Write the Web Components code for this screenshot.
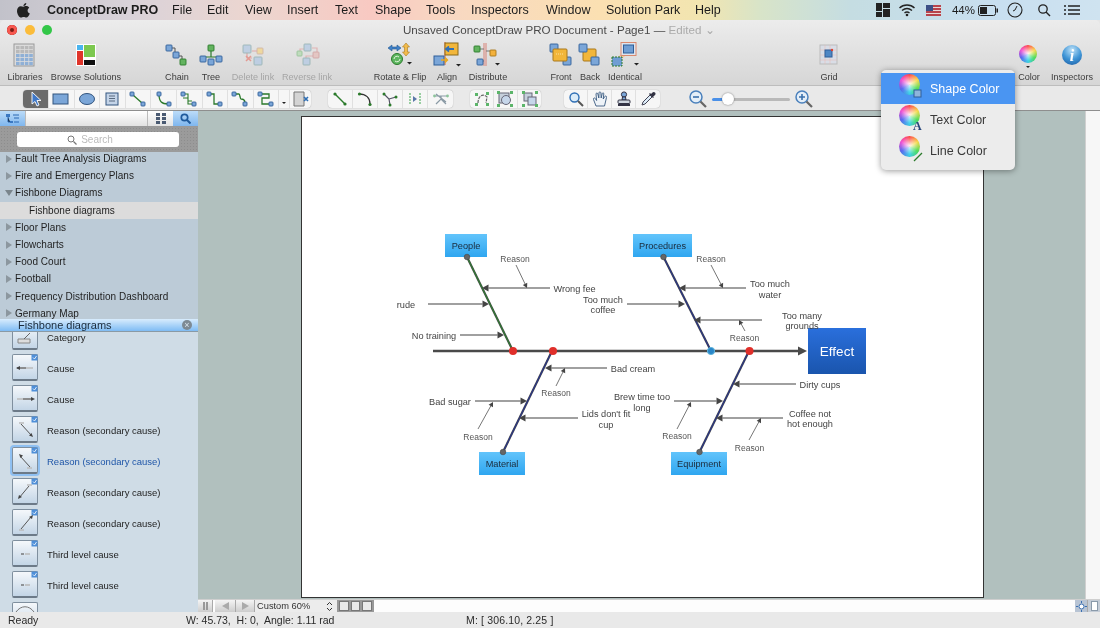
<!DOCTYPE html>
<html>
<head>
<meta charset="utf-8">
<title>ConceptDraw PRO</title>
<style>
  html, body { margin: 0; padding: 0; width: 1100px; height: 628px; overflow: hidden; font-family: "Liberation Sans", Arial, sans-serif; color: #333; background: #e6e6e6; }
  body { filter: blur(.35px); }
  #main-row { display: flex; height: 501px; }
</style>
</head>
<body>
<mac-menubar></mac-menubar>
<doc-toolbar></doc-toolbar>
<palette-bar></palette-bar>
<div id="main-row">
  <library-panel></library-panel>
  <canvas-pane></canvas-pane>
</div>
<status-bar></status-bar>
<color-menu></color-menu>

<script>
// --- small svg helpers ---
const BLUE = ["#7ba6d8", "#2f5f99"];
const GREEN = ["#63b35f", "#2b7a2b"];
const ORANGE = ["#f3b13c", "#a8761a"];

function node(x, y, s, c) {
  return `<rect x="${x}" y="${y}" width="${s}" height="${s}" rx="0.8" fill="${c[0]}" stroke="${c[1]}" stroke-width="0.9"/>`;
}
function line(d, color = "#2b7a2b", w = 1.3) {
  return `<path d="${d}" fill="none" stroke="${color}" stroke-width="${w}"/>`;
}
function svg(w, h, body, extra = "") {
  return `<svg width="${w}" height="${h}" viewBox="0 0 ${w} ${h}" ${extra}>${body}</svg>`;
}

const TOOL_ICONS = {
  libraries: () => {
    let cells = "";
    for (let r = 0; r < 5; r++) for (let c = 0; c < 4; c++) {
      const fill = r > 1 ? "#8fb0d6" : "#b9b9b9";
      cells += `<rect x="${3 + c * 4.4}" y="${3 + r * 4}" width="3.6" height="3.2" fill="${fill}"/>`;
    }
    return svg(24, 24, `<rect x="1" y="1" width="20" height="22" fill="#dcdcdc" stroke="#9a9a9a"/>${cells}`);
  },
  browse: () => svg(24, 24, `<rect x="2" y="1" width="20" height="22" fill="#fff"/><rect x="3" y="2" width="6" height="5" fill="#4ab4ee"/><rect x="10" y="2" width="11" height="12" fill="#7cc84f"/><rect x="3" y="8" width="6" height="14" fill="#e0352b"/><rect x="10" y="17" width="11" height="5" fill="#111"/>`),
  chain: () => svg(26, 24, line("M6 5 H11 V13 H18 V18", "#555", 1) + node(2, 2, 6, BLUE) + node(9, 9, 6, BLUE) + node(16, 16, 6, GREEN)),
  tree: () => svg(26, 24, line("M13 6 V14 M5 14 H21 M5 14 V16 M21 14 V16", "#2b7a2b", 1.2) + node(10, 2, 6, GREEN) + node(2, 13, 6, BLUE) + node(10, 16, 6, BLUE) + node(18, 13, 6, BLUE)),
  del: () => svg(26, 24, line("M7 7 V15 H12 M12 8 H19", "#d99", 1.2) + node(3, 2, 8, ["#b7cbe3", "#8aa"]) + node(17, 5, 6, ["#f1d68f", "#ca9"]) + node(14, 14, 8, ["#b7cbe3", "#8aa"]) + line("M6 13 L11 18 M11 13 L6 18", "#e58a80", 1.6)),
  reverse: () => svg(26, 24, line("M6 9 V6 H12 M18 5 H23 V12 M12 19 V13 H20", "#e0a8a8", 1.2) + node(10, 1, 7, ["#b7cbe3", "#8aa"]) + node(3, 8, 5, ["#b7dcb5", "#8b8"]) + node(19, 9, 6, ["#e6c0bc", "#c99"]) + node(9, 15, 7, ["#b7cbe3", "#8aa"])),
  rotate: () => svg(28, 26, `<path d="M2 6 L6 3 V5 H11 V3 L15 6 L11 9 V7 H6 V9 Z" fill="#3f80c8" stroke="#23588f" stroke-width=".6"/><path d="M20 1 L23.5 5 H21.5 V10 H23.5 L20 14 L16.5 10 H18.5 V5 H16.5 Z" fill="#f2bb4b" stroke="#a9781c" stroke-width=".6"/><circle cx="11" cy="17" r="5.5" fill="#5db660" stroke="#2b7a2b"/><path d="M8 17 a3 3 0 0 1 5 -2 M14 17 a3 3 0 0 1 -5 2" fill="none" stroke="#e8f6e0" stroke-width="1"/><path d="M22 24 h5 l-2.5 2.5z" fill="#222" transform="translate(-1,-4)"/>`),
  align: () => svg(30, 26, `<path d="M13 0 V23" stroke="#e07a5a" stroke-width="1.2"/><rect x="13" y="1" width="13" height="12" fill="#f2b63a" stroke="#8a6a1a"/><path d="M22 7 H15 M17 4.5 L14 7 L17 9.5" fill="none" stroke="#2f6fb5" stroke-width="1.8"/><rect x="2" y="14" width="10" height="9" fill="#7ba6d8" stroke="#2f5f99"/><path d="M9 18 H15 M13 15.5 L15.5 18 L13 20.5" fill="#f2b63a" stroke="#e8a820" stroke-width="1.4"/><path d="M24 22 h5 l-2.5 2.5z" fill="#222"/>`),
  distribute: () => svg(30, 26, `<path d="M11 1 V24 M13 1 V24" stroke="#d98a80" stroke-width="1.1"/><path d="M5 7 H11 M13 9 H18 M7 19 H11" stroke="#777"/>` + node(1, 4, 6, GREEN) + node(17, 8, 6, ORANGE) + node(4, 17, 6, BLUE) + `<path d="M22 21 h5 l-2.5 2.5z" fill="#222"/>`),
  front: () => svg(26, 24, node(2, 1, 8, BLUE) + node(15, 14, 8, BLUE) + `<rect x="5" y="6" width="14" height="12" rx="1" fill="#f2b63a" stroke="#a9781c"/><path d="M8 11h8" stroke="#fbe0a0" stroke-dasharray="1 1"/>`),
  back: () => svg(26, 24, `<rect x="6" y="6" width="13" height="12" rx="1" fill="#f2b63a" stroke="#a9781c"/>` + node(2, 1, 8, BLUE) + node(14, 14, 8, BLUE)),
  identical: () => svg(32, 26, `<path d="M4 22 L20 8" stroke="#f2c7a0" stroke-width="4"/><rect x="12" y="0.5" width="15" height="13" fill="#dde4ee" stroke="#d98a70"/><rect x="14.5" y="3" width="10" height="8" fill="#6f9dd3" stroke="#2f5f99"/><rect x="3" y="15" width="10" height="9" fill="#6f9dd3" stroke="#2b7a2b" stroke-dasharray="2 1"/><path d="M25 21 h5 l-2.5 2.5z" fill="#222"/>`),
  grid: () => svg(24, 24, `<rect x="3" y="2" width="17" height="19" fill="#d9dde6" stroke="#bbb"/><path d="M3 7h17M3 12h17M3 17h17M8 2v19M13 2v19" stroke="#e8b8b0" stroke-width=".5"/><rect x="8" y="7" width="7" height="7" fill="#4e86c4" stroke="#2f5f99"/><circle cx="15" cy="7" r="1.2" fill="#d43"/>`),
  info: () => `<svg width="24" height="24" viewBox="0 0 24 24"><defs><radialGradient id="ig" cx=".5" cy=".25" r=".85"><stop offset="0" stop-color="#bfe2f8"/><stop offset=".55" stop-color="#3f95d6"/><stop offset="1" stop-color="#1c5fa6"/></radialGradient></defs><circle cx="12" cy="12" r="10" fill="url(#ig)"/><text x="12" y="17.5" text-anchor="middle" font-family="Liberation Serif, serif" font-style="italic" font-weight="bold" font-size="16" fill="#fff">i</text></svg>`,
};

// color ball is a conic gradient, svg can't do this one
const BALL_CSS = `
  .ball { display: block; border-radius: 50%; background:
    radial-gradient(circle at 50% 45%, rgba(255,255,255,.9) 0, rgba(255,255,255,.1) 55%, rgba(0,0,0,.12) 100%),
    conic-gradient(#f33 0deg, #f7d63a 60deg, #3fdc4f 120deg, #2fd0e8 180deg, #4a5cf0 240deg, #f23fd0 300deg, #f33 360deg); }
`;

class MacMenubar extends HTMLElement {
  constructor() { super(); this.attachShadow({ mode: "open" }); }
  connectedCallback() {
    const menus = [["File", 172], ["Edit", 207], ["View", 245], ["Insert", 287], ["Text", 335], ["Shape", 375], ["Tools", 426], ["Inspectors", 471], ["Window", 546], ["Solution Park", 606], ["Help", 695]];
    this.shadowRoot.innerHTML = `
      <style>
        :host { display: flex; align-items: center; height: 20px; box-sizing: border-box; font-size: 12.5px; color: #1c1c1c;
          background: linear-gradient(90deg, #c2c2ca 0, #d9d2d9 130px, #ecd6d0 250px, #f8c9c2 370px, #f8d8c2 450px, #fbe0b2 600px, #f2e5b0 700px, #d8e4c8 760px, #c5dde2 850px, #c8dff0 1000px, #cfe3f0 1100px); }
        .apple { width: 47px; padding-left: 16px; box-sizing: border-box; display: flex; }
        .app { font-weight: bold; width: 125px; font-size: 12.5px; }
        .m { white-space: pre; }
        .right { margin-left: auto; display: flex; align-items: center; }
      </style>
      <span class="apple">${svg(15, 17, `<path d="M10.3 1 C10.4 2.8 8.9 4.2 7.4 4.1 C7.3 2.6 8.8 1.1 10.3 1 Z M7.3 4.8 C8.1 4.8 9 4.1 10.3 4.1 C11.5 4.1 12.6 4.8 13.2 5.7 C10.8 7.2 11.3 10.5 13.8 11.5 C13.1 13.3 11.8 15.6 10.3 15.6 C9.3 15.6 8.9 15 7.7 15 C6.5 15 6 15.6 5.1 15.6 C3.3 15.6 1 12 1 8.9 C1 6 2.9 4.3 4.8 4.3 C5.8 4.3 6.6 4.8 7.3 4.8 Z" fill="#222"/>`)}</span>
      <span class="app">ConceptDraw PRO</span>
      ${menus.map((m, i) => {
        const next = i + 1 < menus.length ? menus[i + 1][1] - m[1] : 60;
        return `<span class="m" style="width:${next}px">${m[0]}</span>`;
      }).join("")}
      <span class="right">
        ${svg(16, 16, `<path d="M1 1h6v8H1z M8 1h7v5H8z M1 10h6v5H1z M8 7h7v8H8z" fill="#222"/>`, 'style="margin-right:7px"')}
        ${svg(18, 14, `<path d="M1.5 5 C5.5 1 12.5 1 16.5 5 M4 7.5 C7 5 11 5 14 7.5 M6.5 10 C8 8.8 10 8.8 11.5 10" fill="none" stroke="#222" stroke-width="1.4"/><circle cx="9" cy="12" r="1.3" fill="#222"/>`, 'style="margin-right:10px"')}
        ${svg(15, 11, `<rect width="15" height="11" fill="#b8444c"/><path d="M0 2.5h15M0 5.5h15M0 8.5h15" stroke="#e8d8d8" stroke-width="1"/><rect width="7" height="6" fill="#3c4f86"/>`, 'style="margin-right:11px"')}
        <span style="font-size:11.5px;margin-right:3px">44%</span>
        ${svg(21, 11, `<rect x=".5" y=".5" width="17" height="10" rx="2" fill="none" stroke="#222"/><rect x="2" y="2" width="7" height="7" fill="#222"/><rect x="18.5" y="3.5" width="1.5" height="4" fill="#222"/>`, 'style="margin-right:8px"')}
        ${svg(16, 16, `<circle cx="8" cy="8" r="7" fill="none" stroke="#222" stroke-width="1.1"/><path d="M8 8 L10 4 M8 8 L6 9" stroke="#222" stroke-width="1"/>`, 'style="margin-right:14px"')}
        ${svg(14, 14, `<circle cx="6" cy="6" r="4.2" fill="none" stroke="#222" stroke-width="1.3"/><path d="M9 9 L13 13" stroke="#222" stroke-width="1.5"/>`, 'style="margin-right:13px"')}
        ${svg(16, 12, `<path d="M4 2h12M4 6h12M4 10h12" stroke="#222" stroke-width="1.4"/><path d="M0 2h2M0 6h2M0 10h2" stroke="#222" stroke-width="1.4"/>`, 'style="margin-right:20px"')}
      </span>`;
  }
}

class DocToolbar extends HTMLElement {
  constructor() { super(); this.attachShadow({ mode: "open" }); }
  connectedCallback() {
    // [label, box width, gap before it, icon]
    const tools = [
      ["Libraries", 40, 5, "libraries"],
      ["Browse Solutions", 78, 2, "browse"],
      ["Chain", 34, 35, "chain"],
      ["Tree", 34, 0, "tree"],
      ["Delete link", 50, 0, "del", true],
      ["Reverse link", 58, 0, "reverse", true],
      ["Rotate &amp; Flip", 60, 34, "rotate"],
      ["Align", 34, 0, "align"],
      ["Distribute", 48, 0, "distribute"],
      ["Front", 30, 34, "front"],
      ["Back", 28, 0, "back"],
      ["Identical", 42, 0, "identical"],
      ["Grid", 30, 168, "grid"],
      ["Color", 40, 165, "color"],
      ["Inspectors", 46, 0, "info"],
    ];
    this.shadowRoot.innerHTML = `
      <style>
        :host { display: block; height: 66px; position: relative; box-sizing: border-box; border-radius: 5px 5px 0 0; border-bottom: 1px solid #bdbdbd;
          background: linear-gradient(#ececec, #d6d6d6); }
        ${BALL_CSS}
        .title { display: flex; height: 20px; align-items: center; }
        .lights { display: flex; gap: 7.5px; padding-left: 7px; width: 403px; box-sizing: border-box; }
        .lights i { width: 10px; height: 10px; border-radius: 50%; display: block; }
        .name { font-size: 11.6px; color: #4a4a4a; white-space: pre; }
        .name em { font-style: normal; color: #ababab; }
        .tools { display: flex; height: 45px; }
        .tool { display: flex; flex-direction: column; align-items: center; flex: none; font-size: 9.1px; color: #3c3c3c; white-space: nowrap; }
        .ic { height: 25px; margin-top: 2px; margin-bottom: 5px; display: flex; align-items: center; justify-content: center; }
        .off { color: #a5a5a5; }
        .off svg { opacity: .8; }
        .colorbox { position: relative; width: 20px; height: 20px; }
        .colorbox .ball { width: 18px; height: 18px; }
        .colorbox b { position: absolute; left: 7px; top: 21px; border: 2.5px solid transparent; border-top-color: #222; border-bottom: 0; }
      </style>
      <div class="title">
        <div class="lights">
          <i style="background:#f8584f;box-shadow:inset 0 0 0 3px #f8584f, inset 0 0 0 5px #7a1c14"></i>
          <i style="background:#fbbc3a"></i>
          <i style="background:#33c748"></i>
        </div>
        <span class="name">Unsaved ConceptDraw PRO Document - Page1 — <em>Edited ⌄</em></span>
      </div>
      <div class="tools">
        ${tools.map(t => `
          <div class="tool ${t[4] ? "off" : ""}" style="width:${t[1]}px;margin-left:${t[2]}px">
            <div class="ic">${t[3] === "color" ? '<span class="colorbox"><span class="ball"></span><b></b></span>' : TOOL_ICONS[t[3]]()}</div>
            <span>${t[0]}</span>
          </div>`).join("")}
      </div>`;
  }
}

const PAL = {
  arrow: svg(16, 16, `<path d="M4 1 L4 13 L7 10.5 L9 15 L11 14 L9 9.5 L13 9.5 Z" fill="#3f78c8" stroke="#fff" stroke-width=".9"/>`),
  rect: svg(18, 14, `<rect x="1" y="2" width="15" height="10" fill="#7ba6d8" stroke="#33557f"/>`),
  oval: svg(18, 14, `<ellipse cx="9" cy="7" rx="7.5" ry="5.5" fill="#7ba6d8" stroke="#33557f"/>`),
  card: svg(16, 14, `<rect x="2" y="1" width="12" height="12" fill="#c4d4e8" stroke="#33557f"/><path d="M5 4h6M5 6.5h6M5 9h6" stroke="#5a6b80"/>`),
  c1: svg(18, 16, line("M4 4 L13 12") + node(1, 1, 4, BLUE) + node(12, 11, 4, BLUE)),
  c2: svg(18, 16, line("M4 3 C4 11 7 13 13 13") + node(2, 1, 4, BLUE) + node(12, 11, 4, BLUE)),
  c3: svg(18, 16, line("M3 3 H8 V13 H14 M8 7 H3 M8 10 H12", "#2b7a2b", 1.1) + node(1, 1, 4, BLUE) + node(12, 11, 4, BLUE)),
  c4: svg(18, 16, line("M4 3 H8 V13 H13") + node(1, 1, 4, BLUE) + node(12, 11, 4, BLUE)),
  c5: svg(18, 16, line("M4 3 H8 C9 3 9 8 10 8 C13 8 14 9 14 12") + node(1, 1, 4, BLUE) + node(12, 11, 4, BLUE)),
  c6: svg(18, 16, line("M4 3 H12 V7 H5 V13 H13") + node(1, 1, 4, BLUE) + node(12, 11, 4, BLUE)),
  del: svg(18, 16, `<path d="M2 1 H12 V15 H2 Z" fill="#d4d4d4" stroke="#777"/><path d="M12 6 L16 10 M16 6 L12 10" stroke="#2f6fb5" stroke-width="1.6"/>`),
  l1: svg(16, 16, line("M3 3 L13 13", "#2b7a2b", 1.4) + `<circle cx="3" cy="3" r="1.6" fill="#2b7a2b"/><circle cx="13" cy="13" r="1.6" fill="#2b7a2b"/>`),
  l2: svg(16, 16, line("M2 3 C9 3 13 7 13 13", "#333", 1.3) + `<circle cx="2.5" cy="3" r="1.6" fill="#2b7a2b"/><circle cx="13" cy="13.5" r="1.6" fill="#2b7a2b"/>`),
  l3: svg(16, 16, line("M2 3 L7 8 L8 14 M7 8 L14 6", "#556", 1.2) + `<circle cx="2" cy="3" r="1.5" fill="#2b7a2b"/><circle cx="8" cy="14" r="1.5" fill="#2b7a2b"/><circle cx="14" cy="6" r="1.5" fill="#2b7a2b"/>`),
  l4: svg(16, 16, `<path d="M3 2V14M13 2V14" stroke="#5cb56a" stroke-width="1.2" stroke-dasharray="2 1"/><path d="M6 5 L10 8 L6 11 Z" fill="#5a78a8"/>`),
  l5: svg(18, 16, `<path d="M2 5 H16 M9 5 V8 M4 13 L9 8 L14 13 M4 3 L14 11" stroke="#8a9aa5" stroke-width="1.2" fill="none"/><circle cx="2.5" cy="5" r="1.4" fill="#8cc49a"/><circle cx="15.5" cy="5" r="1.4" fill="#8cc49a"/>`),
  g1: svg(16, 16, `<path d="M4 12 C4 5 9 2 13 6 L12 12" fill="none" stroke="#666" stroke-width="1.2" stroke-dasharray="3 1"/><path d="M1 2h3v3H1zM12 1h3v3h-3zM1 12h3v3H1zM12 12h3v3h-3z" fill="#5cb56a"/>`),
  g2: svg(16, 16, `<rect x="2" y="2" width="10" height="10" fill="#c6d0dc" stroke="#667"/><circle cx="9" cy="9" r="4.5" fill="#c6d6ea" stroke="#667"/><path d="M0 0h3v3H0zM13 0h3v3h-3zM0 13h3v3H0zM13 13h3v3h-3z" fill="#5cb56a"/>`),
  g3: svg(16, 16, `<rect x="2" y="2" width="8" height="8" fill="#c6d0dc" stroke="#667"/><rect x="6" y="6" width="8" height="8" fill="#c6d6ea" stroke="#667"/><path d="M0 0h3v3H0zM13 0h3v3h-3zM0 13h3v3H0zM13 13h3v3h-3z" fill="#5cb56a"/>`),
  mag: svg(16, 16, `<circle cx="6.5" cy="6.5" r="4.5" fill="#dcecf8" stroke="#2f6fb5" stroke-width="1.4"/><path d="M10 10 L15 15" stroke="#555" stroke-width="2"/>`),
  hand: svg(16, 16, `<path d="M4 15 L1.5 8.5 C1 7 2.6 6.4 3.4 7.6 L4.6 9.5 L4 3 C4 1.8 5.6 1.6 5.9 3 L6.8 7 L7 1.8 C7 .6 8.7 .6 8.9 1.8 L9.2 7 L10.2 2.6 C10.5 1.4 12 1.7 11.8 3 L11.2 8 L12.8 5.5 C13.5 4.5 15 5.2 14.5 6.5 L12.5 15 Z" fill="#eef3f8" stroke="#3a5a80" stroke-width=".9"/>`),
  stamp: svg(16, 16, `<circle cx="8" cy="3.5" r="2.6" fill="#7ba6d8" stroke="#334"/><path d="M6.5 6 L6 9 H10 L9.5 6 Z" fill="#7ba6d8" stroke="#334"/><rect x="2" y="9" width="12" height="3.5" rx="1" fill="#cfd6df" stroke="#334"/><rect x="2" y="13" width="12" height="2" fill="#334"/>`),
  drop: svg(16, 16, `<path d="M2 14 L3 11 L10 4 L12 6 L5 13 Z" fill="#dcecf8" stroke="#445"/><path d="M9.5 2.5 L13.5 6.5 M11 4 L13 2 C14 1 15.5 2.5 14.5 3.5 L12.5 5.5" fill="#334" stroke="#334" stroke-width="1.4"/>`),
  zminus: svg(20, 20, `<circle cx="8" cy="8" r="6" fill="#e4eef8" stroke="#4a80bc" stroke-width="1.5"/><path d="M5 8h6" stroke="#3a70ac" stroke-width="1.6"/><path d="M12.5 12.5 L18 18" stroke="#666" stroke-width="2.2"/>`),
  zplus: svg(20, 20, `<circle cx="8" cy="8" r="6" fill="#e4eef8" stroke="#4a80bc" stroke-width="1.5"/><path d="M5 8h6M8 5v6" stroke="#3a70ac" stroke-width="1.6"/><path d="M12.5 12.5 L18 18" stroke="#666" stroke-width="2.2"/>`),
};

class PaletteBar extends HTMLElement {
  constructor() { super(); this.attachShadow({ mode: "open" }); }
  connectedCallback() {
    const cells = (names, w) => names.map(n => `<span class="cell" style="width:${w}px">${PAL[n]}</span>`).join("");
    this.shadowRoot.innerHTML = `
      <style>
        :host { display: flex; align-items: center; height: 25px; box-sizing: border-box; padding: 2px 0 0 23px; background: #e9e9e9; border-bottom: 1px solid #8e8e8e; }
        .group { display: flex; height: 18px; background: #f6f6f6; border-radius: 4px; box-shadow: 0 0 1px rgba(0,0,0,.35); overflow: hidden; }
        .cell { display: flex; align-items: center; justify-content: center; flex: none; box-sizing: border-box; border-right: 1px solid #e0e0e0; }
        .cell:last-child { border-right: 0; }
        .sel { background: #6b6b6b; }
        .more { width: 11px; flex: none; position: relative; border-right: 1px solid #e0e0e0; box-sizing: border-box; }
        .more::after { content: ""; position: absolute; left: 3px; top: 12px; border: 2.5px solid transparent; border-top-color: #222; border-bottom: 0; }
        .track { width: 78px; height: 3px; margin: 0 4px; background: linear-gradient(90deg, #4a90e8 15px, #b9b9b9 15px); border-radius: 2px; position: relative; }
        .track i { position: absolute; left: 10px; top: -5px; width: 12px; height: 12px; border-radius: 50%; background: #fff; box-shadow: 0 0 2px rgba(0,0,0,.5); }
        .z { display: flex; }
      </style>
      <div class="group">
        <span class="cell sel" style="width:26px">${PAL.arrow}</span>
        ${cells(["rect", "oval", "card", "c1", "c2", "c3", "c4", "c5", "c6"], 25.6)}
        <span class="more"></span>
        <span class="cell" style="width:21px">${PAL.del}</span>
      </div>
      <div class="group" style="margin-left:17px">${cells(["l1", "l2", "l3", "l4", "l5"], 25)}</div>
      <div class="group" style="margin-left:17px">${cells(["g1", "g2", "g3"], 23.7)}</div>
      <div class="group" style="margin-left:23px">${cells(["mag", "hand", "stamp", "drop"], 24)}</div>
      <span class="z" style="margin-left:28px">${PAL.zminus}</span>
      <span class="track"><i></i></span>
      <span class="z">${PAL.zplus}</span>`;
  }
}

class TreeRow extends HTMLElement {
  constructor() { super(); this.attachShadow({ mode: "open" }); }
  connectedCallback() {
    const open = this.hasAttribute("open");
    const sub = this.hasAttribute("sub");
    this.shadowRoot.innerHTML = `
      <style>
        :host { display: flex; align-items: center; height: 17.2px; font-size: 10px; color: #1e1e1e; letter-spacing: .05px; white-space: nowrap; padding-left: 6px; box-sizing: border-box; }
        :host([sub]) { background: #dcdcdc; padding-left: 29px; }
        i { width: 9px; display: block; flex: none; }
        i::before { content: ""; display: block; width: 0; height: 0; border: solid transparent; }
        .c::before { border-width: 4px 0 4px 6px; border-left-color: #8c979f; }
        .o::before { border-width: 6px 4px 0 4px; border-top-color: #7a858c; margin-left: -1px; }
      </style>
      ${sub ? "" : `<i class="${open ? "o" : "c"}"></i>`}<slot></slot>`;
  }
}
customElements.define("tree-row", TreeRow);

class LibItem extends HTMLElement {
  constructor() { super(); this.attachShadow({ mode: "open" }); }
  connectedCallback() {
    const glyphs = {
      cat: `<path d="M6 20h12v-4H6z" fill="#ddd" stroke="#888"/><path d="M12 16 L18 10" stroke="#666"/>`,
      cl: `<path d="M5 14 H21" stroke="#bbb" stroke-width="1.5"/><path d="M5 14 H14" stroke="#555"/><path d="M4 14 l4 -2 v4z" fill="#444"/>`,
      cr: `<path d="M5 14 H21" stroke="#bbb" stroke-width="1.5"/><path d="M11 14 H20" stroke="#555"/><path d="M23 14 l-4 -2 v4z" fill="#444"/>`,
      r1: `<path d="M7 7h5" stroke="#bbb" stroke-width="1.5"/><path d="M9 8 L20 20" stroke="#555"/><path d="M21 21 l-4 -1.5 l2.5 -2.5z" fill="#444"/>`,
      r2: `<path d="M15 21h5" stroke="#bbb" stroke-width="1.5"/><path d="M18 20 L8 9" stroke="#555"/><path d="M7 7 l4 1.5 l-2.5 2.5z" fill="#444"/>`,
      r3: `<path d="M15 7h5" stroke="#bbb" stroke-width="1.5"/><path d="M17 8 L7 20" stroke="#555"/><path d="M6 21 l1 -4 l3 2z" fill="#444"/>`,
      r4: `<path d="M7 21h5" stroke="#bbb" stroke-width="1.5"/><path d="M9 20 L19 8" stroke="#555"/><path d="M21 6 l-1 4 l-3 -2z" fill="#444"/>`,
      t: `<path d="M9 14h3" stroke="#666" stroke-width="1.3"/><path d="M13 14h5" stroke="#bbb" stroke-width="1.6"/>`,
      arc: `<path d="M4 10 C9 3 17 3 22 10" fill="none" stroke="#777"/>`,
    };
    const check = `<rect x="19.5" y="0.5" width="6" height="6" fill="#4f8fd8"/><path d="M21 3.5 L22.5 5 L24.5 2" stroke="#fff" fill="none" stroke-width=".8"/>`;
    const kind = this.getAttribute("glyph");
    this.shadowRoot.innerHTML = `
      <style>
        :host { display: flex; align-items: center; height: 31px; flex: none; padding-left: 12px; font-size: 9.5px; color: #1e1e1e; white-space: nowrap; }
        :host([active]) { color: #1f56a8; }
        .tile { width: 26px; height: 27px; box-sizing: border-box; flex: none; margin-right: 9px; margin-top: -2px; border: 1px solid #7f8f9e; border-bottom: 2px solid #6c7a88; border-radius: 2px; background: linear-gradient(#f5f8fb, #c3d5e6); }
        :host([active]) .tile { box-shadow: 0 0 0 2px #8fc0f2; }
        svg { display: block; margin: -1px; }
      </style>
      <div class="tile">${svg(26, 27, (kind === "cat" || kind === "arc" ? "" : check) + glyphs[kind])}</div>
      <slot></slot>`;
  }
}
customElements.define("lib-item", LibItem);

class LibraryPanel extends HTMLElement {
  constructor() { super(); this.attachShadow({ mode: "open" }); }
  connectedCallback() {
    const trees = ["Fault Tree Analysis Diagrams", "Fire and Emergency Plans", "+Fishbone Diagrams", "-Fishbone diagrams", "Floor Plans", "Flowcharts", "Food Court", "Football", "Frequency Distribution Dashboard", "Germany Map"];
    const items = [["cat", "Category"], ["cl", "Cause"], ["cr", "Cause"], ["r1", "Reason (secondary cause)"], ["r2", "Reason (secondary cause)", 1], ["r3", "Reason (secondary cause)"], ["r4", "Reason (secondary cause)"], ["t", "Third level cause"], ["t", "Third level cause"], ["arc", ""]];
    this.shadowRoot.innerHTML = `
      <style>
        :host { display: flex; flex-direction: column; width: 198px; flex: none; background: #cfdce6; overflow: hidden; }
        .tabs { display: flex; height: 15px; flex: none; background: linear-gradient(#fff, #e2e2e2); border-bottom: 1px solid #999; }
        .tabs span { display: flex; align-items: center; justify-content: center; flex: none; width: 25px; box-sizing: border-box; }
        .tabs .on { background: linear-gradient(#bcdcf8, #7fb6ee); }
        .tabs .f { flex: 1; border-left: 1px solid #bbb; border-right: 1px solid #bbb; }
        .search { height: 25px; flex: none; display: flex; align-items: center; padding: 0 19px 0 17px; background-color: #9b9b9b; background-image: radial-gradient(#8d8d8d 35%, transparent 40%); background-size: 3px 3px; }
        .field { flex: 1; height: 15px; background: #fff; border-radius: 3px; display: flex; align-items: center; justify-content: center; gap: 4px; font-size: 10px; color: #bbb; padding-right: 16px; box-sizing: border-box; }
        .tree { height: 167px; flex: none; overflow: hidden; background: #bccbd7; }
        .tree-in { margin-top: -2px; }
        .head { height: 13px; flex: none; box-sizing: border-box; display: flex; align-items: center; padding: 0 6px 0 18px; font-size: 11px; color: #1a2a3a; border-bottom: 1px solid #8a9aa5; background: linear-gradient(#d8ecfd, #7fbcf4); }
        .x { margin-left: auto; width: 10px; height: 10px; border-radius: 50%; background: #7d8a94; color: #d8e4ee; font-size: 9px; line-height: 10px; text-align: center; }
        .list { flex: 1; overflow: hidden; display: flex; flex-direction: column; }
        .list-in { margin-top: -10px; }
      </style>
      <div class="tabs">
        <span class="on">${svg(15, 11, `<path d="M1 1h4v3H1zM5 8h3v2H5z" fill="#3a78c2"/><path d="M3 4v5h2M8 2h6M9 5h5M9 9h5" stroke="#2a68b2"/>`)}</span>
        <span class="f"></span>
        <span>${svg(10, 11, `<path d="M0 0h4v3H0zM6 0h4v3H6zM0 4h4v3H0zM6 4h4v3H6zM0 8h4v3H0zM6 8h4v3H6z" fill="#4a5a72"/>`)}</span>
        <span class="on">${svg(11, 11, `<circle cx="4.5" cy="4.5" r="3.2" fill="none" stroke="#1f5a9c" stroke-width="1.7"/><path d="M7 7L10.5 10.5" stroke="#1f5a9c" stroke-width="2"/>`)}</span>
      </div>
      <div class="search"><div class="field">${svg(10, 10, `<circle cx="4" cy="4" r="3" fill="none" stroke="#777"/><path d="M6.5 6.5L9.5 9.5" stroke="#777" stroke-width="1.2"/>`)}<span>Search</span></div></div>
      <div class="tree"><div class="tree-in">
        ${trees.map(t => {
          if (t[0] === "+") return `<tree-row open>${t.slice(1)}</tree-row>`;
          if (t[0] === "-") return `<tree-row sub>${t.slice(1)}</tree-row>`;
          return `<tree-row>${t}</tree-row>`;
        }).join("")}
      </div></div>
      <div class="head"><span>Fishbone diagrams</span><span class="x">×</span></div>
      <div class="list"><div class="list-in">
        ${items.map(i => `<lib-item glyph="${i[0]}" ${i[2] ? "active" : ""}>${i[1]}</lib-item>`).join("")}
      </div></div>`;
  }
}

class FishboneDiagram extends HTMLElement {
  constructor() { super(); this.attachShadow({ mode: "open" }); }
  connectedCallback() {
    const arrow = (x1, y1, x2, y2, color = "#6a6a6a", w = 1.4, size = 6) => {
      const a = Math.atan2(y2 - y1, x2 - x1);
      const bx = x2 - Math.cos(a) * size, by = y2 - Math.sin(a) * size;
      const px = Math.sin(a) * size * 0.55, py = -Math.cos(a) * size * 0.55;
      return `<line x1="${x1}" y1="${y1}" x2="${bx}" y2="${by}" stroke="${color}" stroke-width="${w}"/>
        <polygon points="${x2},${y2} ${bx + px},${by + py} ${bx - px},${by - py}" fill="#444"/>`;
    };
    const causes = [
      [550, 288, 482, 288], [428, 304, 489, 304], [460, 335, 504, 335], [607, 368, 545, 368], [475, 401, 527, 401], [578, 418, 519, 418],
      [627, 304, 685, 304], [746, 288, 679, 288], [762, 320, 694, 320], [796, 384, 733, 384], [674, 401, 723, 401], [783, 418, 716, 418],
    ];
    const reasons = [
      [516, 265, 527, 288], [556, 386, 565, 368], [478, 429, 493, 402], [711, 265, 723, 288], [745, 331, 739, 320], [677, 429, 691, 402], [749, 440, 761, 418],
    ];
    const labels = [
      ["Wrong fee", 574.5, 289], ["rude", 406, 304.5], ["No training", 434, 336], ["Bad cream", 633, 368.5], ["Bad sugar", 450, 402],
      ["Lids don't fit", 606, 414], ["cup", 606, 424.5], ["Too much", 603, 300], ["coffee", 603, 310], ["Too much", 770, 284], ["water", 770, 294.5],
      ["Too many", 802, 315.5], ["grounds", 802, 325.5], ["Dirty cups", 820, 385], ["Brew time too", 642, 397], ["long", 642, 407.5],
      ["Coffee not", 810, 413.5], ["hot enough", 810, 424],
    ];
    const small = [[515, 259], [556, 392.5], [478, 436.5], [711, 259], [744.5, 338], [677, 436], [749.5, 447.5]];
    const boxes = [["People", 445, 234, 42], ["Material", 479, 452, 46], ["Procedures", 633, 234, 59], ["Equipment", 671, 452, 56]];
    const bones = [[467, 257, 513, 351, "#2e7d32"], [503, 452, 552, 351, "#27348b"], [663.5, 257, 711, 351, "#27348b"], [699.5, 452, 749, 351, "#27348b"]];
    this.shadowRoot.innerHTML = `
      <style>
        :host { display: block; width: 100%; height: 100%; }
        svg { display: block; }
        text { font-family: "Liberation Sans", Arial, sans-serif; font-size: 9.2px; fill: #444; text-anchor: middle; dominant-baseline: central; }
        .s { font-size: 8.5px; fill: #555; }
        .b { font-size: 9.2px; fill: #1b2a3a; }
        .e { font-size: 13.5px; fill: #fff; }
      </style>
      <svg width="681" height="480" viewBox="302 117 681 480">
        <defs>
          <linearGradient id="cy" x1="0" y1="0" x2="0" y2="1"><stop offset="0" stop-color="#62c4fb"/><stop offset="1" stop-color="#2fa6f0"/></linearGradient>
          <linearGradient id="ef" x1="0" y1="0" x2="0" y2="1"><stop offset="0" stop-color="#2a6fdc"/><stop offset="1" stop-color="#1a55ad"/></linearGradient>
        </defs>
        <line x1="433" y1="351" x2="799" y2="351" stroke="#4a4a4a" stroke-width="2.6"/>
        <polygon points="807,351 798,346.5 798,355.5" fill="#4a4a4a"/>
        ${bones.map(b => `<line x1="${b[0]}" y1="${b[1]}" x2="${b[2]}" y2="${b[3]}" stroke="#4a4a4a" stroke-width="2.2"/><line x1="${b[0]}" y1="${b[1]}" x2="${b[2]}" y2="${b[3]}" stroke="${b[4]}" stroke-width="1.1"/>`).join("")}
        ${causes.map(c => arrow(c[0], c[1], c[2], c[3], "#808080", 1.5, 6.5)).join("")}
        ${reasons.map(r => arrow(r[0], r[1], r[2], r[3], "#666", 0.9, 4.5)).join("")}
        ${boxes.map(b => `<rect x="${b[1]}" y="${b[2]}" width="${b[3]}" height="23" fill="url(#cy)"/><text class="b" x="${b[1] + b[3] / 2}" y="${b[2] + 12}">${b[0]}</text>`).join("")}
        ${[[467, 257], [503, 452], [663.5, 257], [699.5, 452]].map(d => `<circle cx="${d[0]}" cy="${d[1]}" r="2.8" fill="#666" stroke="#444" stroke-width=".6"/>`).join("")}
        ${[[513, 351], [553, 351], [749.5, 351]].map(d => `<circle cx="${d[0]}" cy="${d[1]}" r="4" fill="#e02f2a"/>`).join("")}
        <circle cx="711" cy="351" r="3.6" fill="#2a86c8" stroke="#5fb4dc" stroke-width="1"/>
        <rect x="808" y="328" width="58" height="46" fill="url(#ef)"/>
        <text class="e" x="837" y="351">Effect</text>
        ${labels.map(l => `<text x="${l[1]}" y="${l[2]}">${l[0]}</text>`).join("")}
        ${small.map(l => `<text class="s" x="${l[0]}" y="${l[1]}">Reason</text>`).join("")}
      </svg>`;
  }
}
customElements.define("fishbone-diagram", FishboneDiagram);

class CanvasPane extends HTMLElement {
  constructor() { super(); this.attachShadow({ mode: "open" }); }
  connectedCallback() {
    const sq = `<i></i><i></i><i></i>`;
    this.shadowRoot.innerHTML = `
      <style>
        :host { display: flex; flex-direction: column; flex: 1; min-width: 0; }
        .top { flex: 1; display: flex; min-height: 0; }
        .view { flex: 1; background: #b1c0be; padding: 5px 0 0 103px; box-sizing: border-box; overflow: hidden; }
        .page { width: 683px; height: 482px; box-sizing: border-box; background: #fff; border: 1px solid #333; }
        .vs { width: 15px; flex: none; background: #f7f7f7; border-left: 1px solid #d0d0d0; box-sizing: border-box; }
        .bar { height: 12px; flex: none; display: flex; align-items: center; background: #fdfdfd; border-top: 1px solid #cfcfcf; font-size: 9.3px; color: #333; }
        .btn { height: 12px; flex: none; display: flex; align-items: center; justify-content: center; background: linear-gradient(#f4f4f4, #cdcdcd); border-right: 1px solid #aaa; box-sizing: border-box; }
        .sel { width: 82px; height: 12px; display: flex; align-items: center; padding-left: 2px; box-sizing: border-box; flex: none; background: #ececec; }
        .sel svg { margin-left: auto; margin-right: 4px; }
        .sq { display: flex; width: 37px; height: 12px; gap: 2px; padding: 1px 2px; box-sizing: border-box; background: #999; flex: none; }
        .sq i { display: block; flex: 1; background: #e9e9e9; border: 1px solid #777; box-sizing: border-box; }
        .end { margin-left: auto; display: flex; }
      </style>
      <div class="top">
        <div class="view"><div class="page"><fishbone-diagram></fishbone-diagram></div></div>
        <div class="vs"></div>
      </div>
      <div class="bar">
        <span class="btn" style="width:15px">${svg(7, 8, `<path d="M1 0h2v8H1zM4 0h2v8H4z" fill="#999"/>`)}</span>
        <span class="btn" style="width:21px;margin-left:2px">${svg(7, 8, `<path d="M7 0v8L0 4z" fill="#aaa"/>`)}</span>
        <span class="btn" style="width:19px">${svg(7, 8, `<path d="M0 0v8l7-4z" fill="#aaa"/>`)}</span>
        <span class="sel">Custom 60%${svg(7, 11, `<path d="M1 4L3.5 1.5L6 4M1 7L3.5 9.5L6 7" fill="none" stroke="#333"/>`)}</span>
        <span class="sq">${sq}</span>
        <span class="end">
          <span class="btn" style="width:13px;background:#b8c4d4">${svg(11, 11, `<circle cx="5.5" cy="5.5" r="2.5" fill="#fff" stroke="#3a6fb0"/><path d="M5 0h1v2H5zM5 9h1v2H5zM0 5h2v1H0zM9 5h2v1H9z" fill="#3a6fb0"/>`)}</span>
          <span class="btn" style="width:12px;background:#c4ccd6;border:0">${svg(7, 10, `<rect x=".5" y=".5" width="6" height="9" fill="#fff" stroke="#8a9aaa"/>`)}</span>
        </span>
      </div>`;
  }
}

class StatusBar extends HTMLElement {
  constructor() { super(); this.attachShadow({ mode: "open" }); }
  connectedCallback() {
    this.shadowRoot.innerHTML = `
      <style>
        :host { display: flex; align-items: center; height: 15px; font-size: 10.5px; color: #2a2a2a; background: #e9e9e9; white-space: pre; padding-bottom: 2px; box-sizing: content-box; }
        .a { width: 186px; padding-left: 8px; box-sizing: border-box; }
        .b { width: 280px; }
      </style>
      <span class="a">Ready</span>
      <span class="b">W: 45.73,  H: 0,  Angle: 1.11 rad</span>
      <span style="letter-spacing:.15px">M: [ 306.10, 2.25 ]</span>`;
  }
}

class ColorMenu extends HTMLElement {
  constructor() { super(); this.attachShadow({ mode: "open" }); }
  connectedCallback() {
    const rows = [
      ["Shape Color", `<rect x="0" y="0" width="7" height="7" fill="#8fb4dc" stroke="#2f5f99"/>`, 1],
      ["Text Color", `<text x="-1" y="9" font-family="Liberation Serif, serif" font-weight="bold" font-size="12" fill="#26457a">A</text>`],
      ["Line Color", `<path d="M0 9 L8 1" stroke="#2b7a2b" stroke-width="1.2"/>`],
    ];
    this.shadowRoot.innerHTML = `
      <style>
        :host { position: absolute; left: 881px; top: 70px; width: 134px; height: 100px; box-sizing: border-box; padding-top: 3px; background: #ececec; border-radius: 5px; box-shadow: 0 1px 6px rgba(0,0,0,.4); font-size: 12.5px; color: #3a3a3a; }
        ${BALL_CSS}
        .row { height: 31px; display: flex; align-items: center; position: relative; padding-left: 18px; }
        .on { background: #4a95f2; color: #fff; }
        .ball { width: 21px; height: 21px; margin-right: 10px; margin-top: -8px; flex: none; }
        .row svg { position: absolute; left: 33px; top: 17px; overflow: visible; }
      </style>
      ${rows.map(r => `<div class="row ${r[2] ? "on" : ""}"><span class="ball"></span>${svg(10, 11, r[1])}<span>${r[0]}</span></div>`).join("")}`;
  }
}

customElements.define("mac-menubar", MacMenubar);
customElements.define("doc-toolbar", DocToolbar);
customElements.define("palette-bar", PaletteBar);
customElements.define("library-panel", LibraryPanel);
customElements.define("canvas-pane", CanvasPane);
customElements.define("status-bar", StatusBar);
customElements.define("color-menu", ColorMenu);
</script>
</body>
</html>
